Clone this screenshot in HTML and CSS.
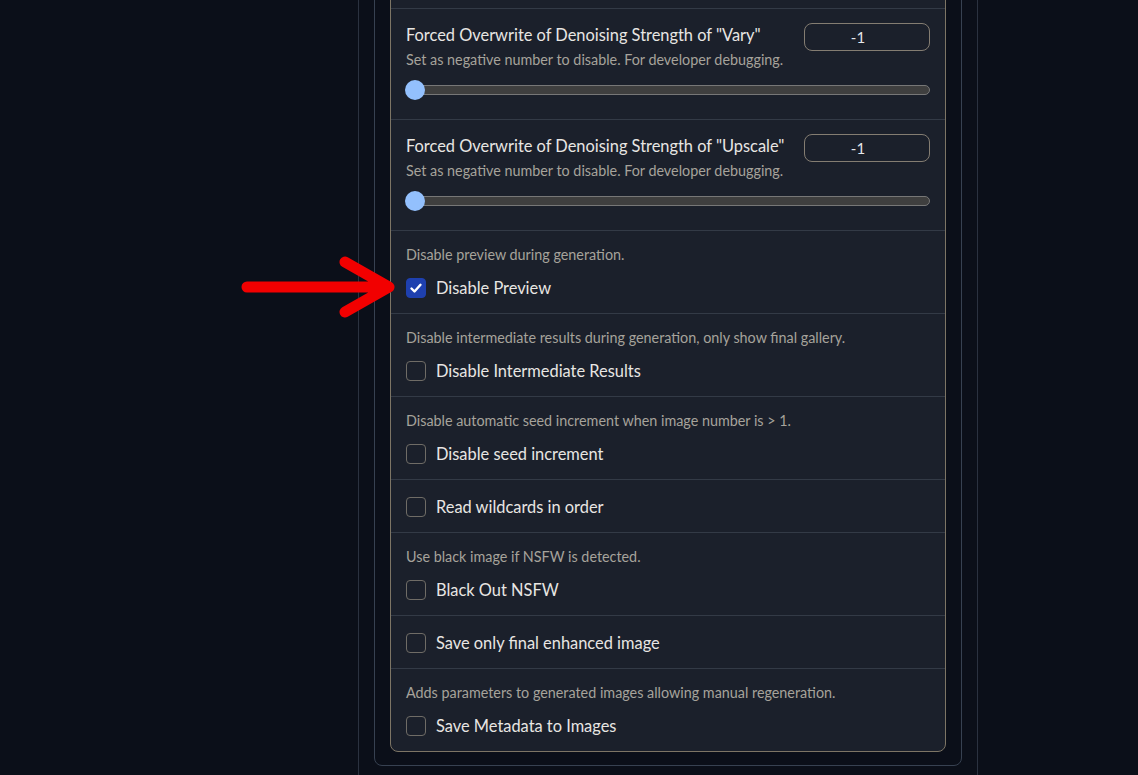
FILE: index.html
```html
<!DOCTYPE html>
<html>
<head>
<meta charset="utf-8">
<link rel="stylesheet" href="styles.css">
</head>
<body>
<div class="outer">
  <div class="inner">
    <div class="panel">
      <div class="row filler"></div>
      <div class="row slider-row">
        <div class="head">
          <div class="title">Forced Overwrite of Denoising Strength of "Vary"</div>
          <div class="num">-1</div>
        </div>
        <div class="desc">Set as negative number to disable. For developer debugging.</div>
        <div class="slider"><div class="thumb"></div></div>
      </div>
      <div class="row slider-row">
        <div class="head">
          <div class="title">Forced Overwrite of Denoising Strength of "Upscale"</div>
          <div class="num">-1</div>
        </div>
        <div class="desc">Set as negative number to disable. For developer debugging.</div>
        <div class="slider"><div class="thumb"></div></div>
      </div>
      <div class="row">
        <div class="desc">Disable preview during generation.</div>
        <label class="check"><span class="box on"><svg viewBox="0 0 20 20" width="20" height="20"><path d="M5.5 10.5 L8.5 13.5 L14.5 6.8" fill="none" stroke="#fff" stroke-width="2.4" stroke-linecap="round" stroke-linejoin="round"/></svg></span><span class="lbl">Disable Preview</span></label>
      </div>
      <div class="row">
        <div class="desc">Disable intermediate results during generation, only show final gallery.</div>
        <label class="check"><span class="box"></span><span class="lbl">Disable Intermediate Results</span></label>
      </div>
      <div class="row">
        <div class="desc">Disable automatic seed increment when image number is &gt; 1.</div>
        <label class="check"><span class="box"></span><span class="lbl">Disable seed increment</span></label>
      </div>
      <div class="row">
        <label class="check"><span class="box"></span><span class="lbl">Read wildcards in order</span></label>
      </div>
      <div class="row">
        <div class="desc">Use black image if NSFW is detected.</div>
        <label class="check"><span class="box"></span><span class="lbl">Black Out NSFW</span></label>
      </div>
      <div class="row">
        <label class="check"><span class="box"></span><span class="lbl">Save only final enhanced image</span></label>
      </div>
      <div class="row">
        <div class="desc">Adds parameters to generated images allowing manual regeneration.</div>
        <label class="check"><span class="box"></span><span class="lbl">Save Metadata to Images</span></label>
      </div>
    </div>
  </div>
</div>
<svg class="arrow" width="170" height="70" viewBox="0 0 170 70"><path d="M12 35 H153 M110 10 L154 35 L110 60" fill="none" stroke="#f20000" stroke-width="11" stroke-linecap="round" stroke-linejoin="round"/></svg>
</body>
</html>
```

FILE: styles.css
```css
html, body {
  margin: 0;
  padding: 0;
  background: #0b0f19;
  height: 100%;
  overflow: hidden;
}
body {
  font-family: Lato, "Liberation Sans", sans-serif;
  color: #e5e7eb;
  position: relative;
}
.outer {
  margin-left: 358px;
  width: 588px;
  margin-top: -60px;
  border-left: 1px solid #2b3240;
  border-right: 1px solid #2b3240;
  padding: 0 15px 40px 15px;
  box-sizing: content-box;
}
.inner {
  border: 1px solid #374151;
  border-radius: 8px;
  padding: 15px 15px 13px 15px;
}
.panel {
  border: 1px solid #7d7565;
  border-radius: 8px;
  background: #1b202b;
  overflow: hidden;
}
.row {
  border-top: 1px solid #333a46;
  padding: 14px 15px 15px 15px;
}
.row.filler {
  border-top: none;
  height: 51px;
  padding: 0;
  box-sizing: border-box;
}
.head {
  display: flex;
  justify-content: space-between;
  align-items: flex-start;
  margin-bottom: -1px;
}
.title {
  font-size: 16.4px;
  line-height: 24px;
  color: #e8e6e3;
}
.num {
  width: 124px;
  height: 26px;
  border: 1px solid #847d72;
  border-radius: 8px;
  font-size: 15px;
  line-height: 26px;
  text-align: center;
  text-indent: -18px;
  color: #e5e7eb;
}
.desc {
  font-size: 14.35px;
  line-height: 20px;
  color: #a6a39b;
}
.slider {
  margin-top: 15px;
  margin-bottom: 9px;
  height: 8px;
  background: #3f3f3f;
  border: 1px solid #777;
  border-radius: 6px;
  position: relative;
}
.thumb {
  position: absolute;
  left: -2px;
  top: -6px;
  width: 20px;
  height: 20px;
  border-radius: 50%;
  background: #93c0fd;
}
.check {
  display: flex;
  align-items: center;
  gap: 10px;
  margin-top: 12px;
  height: 21px;
}
.row > .check:first-child {
  margin-top: 2px;
}
.box {
  width: 18px;
  height: 18px;
  border: 1px solid #6f6c66;
  border-radius: 4px;
  display: inline-block;
  flex: none;
}
.box.on {
  background: #1e40af;
  border-color: #1e40af;
  position: relative;
}
.box.on svg {
  position: absolute;
  left: -1px;
  top: -1px;
}
.lbl {
  font-size: 16.4px;
  color: #e8e6e3;
}
.arrow {
  position: absolute;
  left: 235px;
  top: 252px;
}
```
